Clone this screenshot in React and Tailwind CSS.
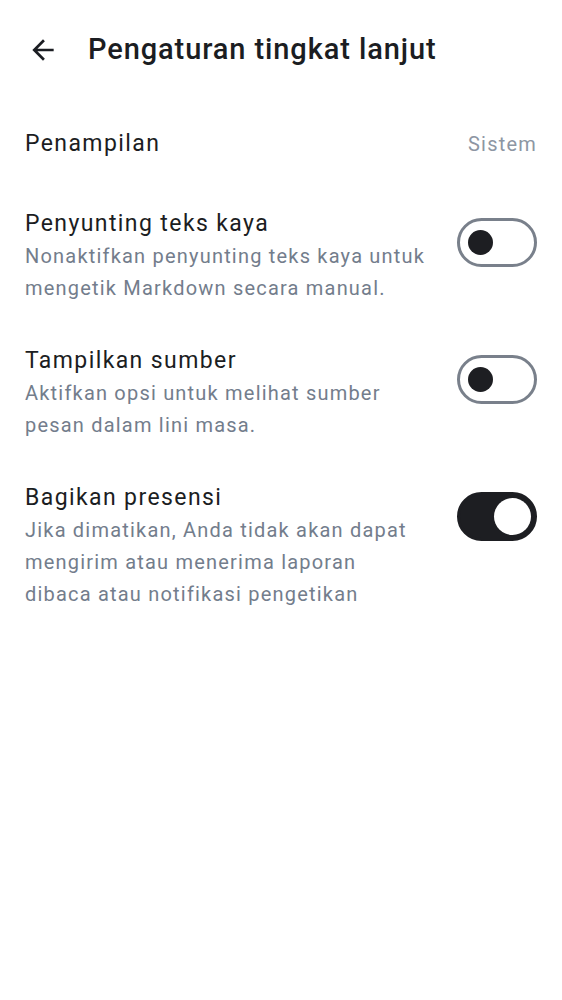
import { useState } from "react";

function Toggle({ on, onChange }) {
  return (
    <button
      onClick={onChange}
      className={
        "shrink-0 w-[80px] h-[49px] rounded-full border-[3px] flex items-center " +
        (on ? "bg-[#1d1e22] border-[#1d1e22] justify-end pr-[3px]" : "bg-white border-[#79808b] pl-[8px]")
      }
    >
      {on ? (
        <span className="w-[37px] h-[37px] rounded-full bg-white" />
      ) : (
        <span className="w-[25px] h-[25px] rounded-full bg-[#1d1e22]" />
      )}
    </button>
  );
}

function SettingRow({ title, desc, on, onChange }) {
  return (
    <div className="flex items-start justify-between pl-[25px] pr-[25px]">
      <div className="flex flex-col w-[402px] pt-[1px]">
        <div className="text-[23px] leading-[33px] text-[#1b1d22] tracking-[1.4px]">{title}</div>
        <div className="text-[20px] leading-[32px] text-[#737d8c] tracking-[1.2px]">{desc}</div>
      </div>
      <div className="mt-[12px]">
        <Toggle on={on} onChange={onChange} />
      </div>
    </div>
  );
}

export default function App() {
  const [rich, setRich] = useState(false);
  const [source, setSource] = useState(false);
  const [presence, setPresence] = useState(true);

  return (
    <div className="w-[562px] h-[1000px] bg-white" style={{ fontFamily: "Roboto, sans-serif" }}>
      {/* Header */}
      <header className="flex items-center h-[100px] pl-[27px]">
        <button className="text-[#1b1d22]">
          <svg width="32" height="32" viewBox="0 0 24 24" fill="currentColor">
            <path d="M20 11H7.83l5.59-5.59L12 4l-8 8 8 8 1.41-1.41L7.83 13H20v-2z" />
          </svg>
        </button>
        <h1 className="ml-[29px] text-[29px] text-[#1b1d22] font-medium tracking-[0.9px]">Pengaturan tingkat lanjut</h1>
      </header>

      <div className="flex items-center justify-between px-[25px] h-[88px]">
        <span className="text-[23px] text-[#1b1d22] tracking-[1.4px]">Penampilan</span>
        <span className="text-[20px] text-[#8d96a3] tracking-[1.2px]">Sistem</span>
      </div>

      <div className="flex flex-col gap-[39px] pt-[18px]">
        <SettingRow
          title="Penyunting teks kaya"
          desc="Nonaktifkan penyunting teks kaya untuk mengetik Markdown secara manual."
          on={rich}
          onChange={() => setRich(!rich)}
        />
        <SettingRow
          title="Tampilkan sumber"
          desc="Aktifkan opsi untuk melihat sumber pesan dalam lini masa."
          on={source}
          onChange={() => setSource(!source)}
        />
        <SettingRow
          title="Bagikan presensi"
          desc="Jika dimatikan, Anda tidak akan dapat mengirim atau menerima laporan dibaca atau notifikasi pengetikan"
          on={presence}
          onChange={() => setPresence(!presence)}
        />
      </div>
    </div>
  );
}
